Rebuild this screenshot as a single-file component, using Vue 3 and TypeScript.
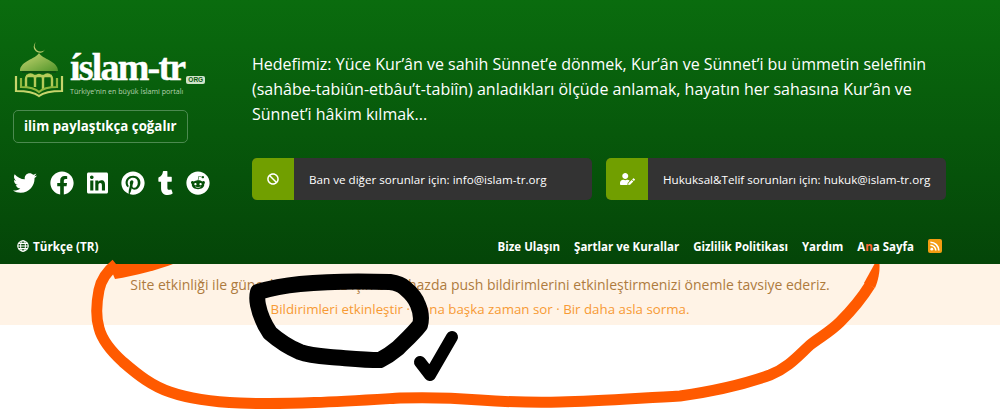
<script setup lang="ts">
const socials = [
  { name: 'twitter', box: '0 0 512 512', w: 24, d: 'M459.37 151.716c.325 4.548.325 9.097.325 13.645 0 138.72-105.583 298.558-298.558 298.558-59.452 0-114.68-17.219-161.137-47.106 8.447.974 16.568 1.299 25.34 1.299 49.055 0 94.213-16.568 130.274-44.832-46.132-.975-84.792-31.188-98.112-72.772 6.498.974 12.995 1.624 19.818 1.624 9.421 0 18.843-1.3 27.614-3.573-48.081-9.747-84.143-51.98-84.143-102.985v-1.299c13.969 7.797 30.214 12.67 47.431 13.319-28.264-18.843-46.781-51.005-46.781-87.391 0-19.492 5.197-37.36 14.294-52.954 51.655 63.675 129.3 105.258 216.365 109.807-1.624-7.797-2.599-15.918-2.599-24.04 0-57.828 46.782-104.934 104.934-104.934 30.213 0 57.502 12.67 76.67 33.137 23.715-4.548 46.456-13.32 66.599-25.34-7.798 24.366-24.366 44.833-46.132 57.827 21.117-2.273 41.584-8.122 60.426-16.243-14.292 20.791-32.161 39.308-52.628 54.253z' },
  { name: 'facebook', box: '0 0 512 512', w: 24, d: 'M504 256C504 119 393 8 256 8S8 119 8 256c0 123.78 90.69 226.38 209.25 245V327.69h-63V256h63v-54.64c0-62.15 37-96.48 93.67-96.48 27.14 0 55.52 4.84 55.52 4.84v61h-31.28c-30.8 0-40.41 19.12-40.41 38.73V256h68.78l-11 71.69h-57.78V501C413.31 482.38 504 379.78 504 256z' },
  { name: 'linkedin', box: '0 0 448 512', w: 21, d: 'M416 32H31.9C14.3 32 0 46.5 0 64.3v383.4C0 465.5 14.3 480 31.9 480H416c17.6 0 32-14.5 32-32.3V64.3c0-17.8-14.4-32.3-32-32.3zM135.4 416H69V202.2h66.5V416zm-33.2-243c-21.3 0-38.5-17.3-38.5-38.5S80.9 96 102.2 96c21.2 0 38.5 17.3 38.5 38.5 0 21.3-17.2 38.5-38.5 38.5zm282.1 243h-66.4V312c0-24.8-.5-56.7-34.5-56.7-34.6 0-39.9 27-39.9 54.9V416h-66.4V202.2h63.7v29.2h.9c8.9-16.8 30.6-34.5 62.9-34.5 67.2 0 79.7 44.3 79.7 101.9V416z' },
  { name: 'pinterest', box: '0 0 496 512', w: 24, d: 'M496 256c0 137-111 248-248 248-25.6 0-50.2-3.9-73.4-11.1 10.1-16.5 25.2-43.5 30.8-65 3-11.6 15.4-59 15.4-59 8.1 15.4 31.7 28.5 56.8 28.5 74.8 0 128.7-68.8 128.7-154.3 0-81.9-66.9-143.2-152.9-143.2-107 0-163.9 71.8-163.9 150.1 0 36.4 19.4 81.7 50.3 96.1 4.7 2.2 7.2 1.2 8.3-3.3.8-3.4 5-20.3 6.9-28.1.6-2.5.3-4.7-1.7-7.1-10.1-12.5-18.3-35.3-18.3-56.6 0-54.7 41.4-107.6 112-107.6 60.9 0 103.6 41.5 103.6 100.9 0 67.1-33.9 113.6-78 113.6-24.3 0-42.6-20.1-36.7-44.8 7-29.5 20.5-61.3 20.5-82.6 0-19-10.2-34.9-31.4-34.9-24.9 0-44.9 25.7-44.9 60.2 0 22 7.4 36.8 7.4 36.8s-24.5 103.8-29 123.2c-5 21.4-3 51.6-.9 71.2C65.4 450.9 0 361.1 0 256 0 119 111 8 248 8s248 111 248 248z' },
  { name: 'tumblr', box: '0 0 320 512', w: 15, d: 'M309.8 480.3c-13.6 14.5-50 31.7-97.4 31.7-120.8 0-147-88.8-147-140.6v-144H17.9c-5.5 0-10-4.5-10-10v-68c0-7.2 4.5-13.6 11.3-16 62-21.8 81.5-76 84.3-117.1.8-11 6.5-16.3 16.1-16.3h70.9c5.5 0 10 4.5 10 10v115.2h83c5.5 0 10 4.4 10 9.9v81.7c0 5.5-4.5 10-10 10h-83.4V360c0 34.2 23.7 53.6 68 35.8 4.8-1.9 9-3.2 12.7-2.2 3.5.9 5.8 3.4 7.4 7.9l22 64.3c1.8 5 3.3 10.6-.4 14.5z' },
  { name: 'reddit', box: '0 0 512 512', w: 24, d: 'M201.5 305.5c-13.8 0-24.9-11.1-24.9-24.6 0-13.8 11.1-24.9 24.9-24.9 13.6 0 24.6 11.1 24.6 24.9 0 13.6-11.1 24.6-24.6 24.6zM504 256c0 137-111 248-248 248S8 393 8 256 119 8 256 8s248 111 248 248zm-132.3-41.2c-9.4 0-17.7 3.9-23.8 10-22.4-15.5-52.6-25.5-86.1-26.6l17.4-78.3 55.4 12.5c0 13.6 11.1 24.6 24.6 24.6 13.8 0 24.9-11.3 24.9-24.9s-11.1-24.9-24.9-24.9c-9.7 0-18 5.8-22.1 13.8l-61.2-13.6c-3-.8-6.1 1.4-6.9 4.4l-19.1 86.4c-33.2 1.4-63.1 11.3-85.5 26.8-6.1-6.4-14.7-10.2-24.1-10.2-34.9 0-46.3 46.9-14.4 62.8-1.1 5-1.7 10.2-1.7 15.5 0 52.6 59.2 95.2 132 95.2 73.1 0 132.3-42.6 132.3-95.2 0-5.3-.6-10.8-1.9-15.8 31.3-16 19.8-62.5-14.9-62.5zM302.8 331c-18.2 18.2-76.1 17.9-93.6 0-2.2-2.2-6.1-2.2-8.3 0-2.5 2.5-2.5 6.4 0 8.6 22.8 22.8 87.3 22.8 110.2 0 2.5-2.2 2.5-6.1 0-8.6-2.2-2.2-6.1-2.2-8.3 0zm7.7-75c-13.6 0-24.6 11.1-24.6 24.9 0 13.6 11.1 24.6 24.6 24.6 13.8 0 24.9-11.1 24.9-24.6 0-13.8-11-24.9-24.9-24.9z' },
]

const links = ['Bize Ulaşın', 'Şartlar ve Kurallar', 'Gizlilik Politikası', 'Yardım']
</script>

<template>
  <div class="page">
    <header class="top">
      <div class="main">
        <aside class="brand">
          <div class="logo">
            <svg class="mosque" viewBox="0 0 52 58" width="52" height="58">
              <defs>
                <linearGradient id="dome" x1="0" y1="0" x2="1" y2="1">
                  <stop offset="0" stop-color="#cbd873" />
                  <stop offset="1" stop-color="#4f9429" />
                </linearGradient>
              </defs>
              <path d="M23 2a6 6 0 1 0 9 7.5a5 5 0 0 1-9-7.5z" fill="#b9c96a" />
              <path d="M26 13c3 6 19 8 19 18H7c0-10 16-12 19-18z" fill="url(#dome)" />
              <path d="M9 31h34v2H9z" fill="#0b4f10" />
              <path d="M13 47v-8a4.500 4.500 0 0 1 9 0v8M22 39a4 4 0 0 1 8 0v11M30 39a4.500 4.500 0 0 1 9 0v8M13 36h26" fill="none" stroke="#b5cb59" stroke-width="2.400" />
              <path d="M3 36v15c9 0 18 1 23 5c5-4 14-5 23-5V36" fill="none" stroke="#c7d56c" stroke-width="2.200" />
              <path d="M8 38v9c7 0 14 1 18 5c4-4 11-5 18-5v-9" fill="none" stroke="#8fb83e" stroke-width="2.200" />
            </svg>
            <div class="wordmark">
              <div class="name">íslam-tr<span class="org">ORG</span></div>
              <div class="tagline">Türkiye'nin en büyük İslami portalı</div>
            </div>
          </div>
          <div class="motto">ilim paylaştıkça çoğalır</div>
          <div class="socials">
            <svg v-for="s in socials" :key="s.name" :viewBox="s.box" :width="s.w" height="24" fill="#fff">
              <path :d="s.d" />
            </svg>
          </div>
        </aside>
        <section class="about">
          <p class="goal">Hedefimiz: Yüce Kur’ân ve sahih Sünnet’e dönmek, Kur’ân ve Sünnet’i bu ümmetin selefinin (sahâbe-tabiûn-etbâu’t-tabiîn) anladıkları ölçüde anlamak, hayatın her sahasına Kur’ân ve Sünnet’i hâkim kılmak...</p>
          <div class="contacts">
            <div class="contact">
              <span class="contact-icon">
                <svg viewBox="0 0 512 512" width="12" height="12" fill="#fff"><path d="M256 8C119.034 8 8 119.033 8 256s111.034 248 248 248 248-111.034 248-248S392.967 8 256 8zm130.108 117.892c65.448 65.448 70 165.481 20.677 235.637L150.47 105.216c70.204-49.356 170.226-44.735 235.638 20.676zM125.892 386.108c-65.448-65.448-70-165.481-20.677-235.637L361.53 406.784c-70.203 49.356-170.226 44.736-235.638-20.676z" /></svg>
              </span>
              <span class="contact-text">Ban ve diğer sorunlar için: info@islam-tr.org</span>
            </div>
            <div class="contact">
              <span class="contact-icon">
                <svg viewBox="0 0 640 512" width="15" height="12" fill="#fff"><path d="M224 256c70.7 0 128-57.3 128-128S294.7 0 224 0 96 57.3 96 128s57.3 128 128 128zm89.6 32h-16.7c-22.2 10.2-46.9 16-72.9 16s-50.6-5.8-72.9-16h-16.7C60.2 288 0 348.2 0 422.4V464c0 26.5 21.5 48 48 48h274.9c-2.4-6.8-3.4-14-2.6-21.3l6.8-60.9 1.2-11.1 7.9-7.9 77.3-77.3c-24.5-27.7-60-45.5-99.9-45.5zm45.3 145.3l-6.8 61c-1.1 10.2 7.5 18.8 17.6 17.6l60.9-6.8 137.9-137.9-71.7-71.7-138 137.8zM633 268.9L595.1 231c-9.3-9.3-24.5-9.3-33.8 0l-37.8 37.8-4.1 4.1 71.8 71.7 41.8-41.8c9.3-9.4 9.3-24.5 0-33.9z" /></svg>
              </span>
              <span class="contact-text">Hukuksal&amp;Telif sorunları için: hukuk@islam-tr.org</span>
            </div>
          </div>
        </section>
      </div>
      <nav class="bottom">
        <span class="lang">
          <svg viewBox="0 0 16 16" width="12" height="12" fill="none" stroke="#fff" stroke-width="1.4">
            <circle cx="8" cy="8" r="7" />
            <ellipse cx="8" cy="8" rx="3.2" ry="7" />
            <path d="M1 8h14M2 4.500h12M2 11.500h12" />
          </svg>
          Türkçe (TR)
        </span>
        <div class="links">
          <span v-for="l in links" :key="l">{{ l }}</span>
          <span>A<span class="struck">n</span>a Sayfa</span>
          <svg class="rss" viewBox="0 0 14 14" width="14" height="14">
            <rect width="14" height="14" rx="2" fill="#f39c12" />
            <circle cx="3.8" cy="10.2" r="1.4" fill="#fff" />
            <path d="M2.4 6.2a5.4 5.4 0 0 1 5.4 5.4M2.4 3.2a8.4 8.4 0 0 1 8.4 8.4" fill="none" stroke="#fff" stroke-width="1.6" />
          </svg>
        </div>
      </nav>
    </header>
    <div class="notice">
      <p class="notice-text">Site etkinliği ile güncel tutulmanız için bu cihazda push bildirimlerini etkinleştirmenizi önemle tavsiye ederiz.</p>
      <p class="notice-actions">Bildirimleri etkinleştir · Bana başka zaman sor · Bir daha asla sorma.</p>
    </div>
    <!-- hand drawn marks on top of the screenshot -->
    <svg class="scribble" viewBox="0 0 1000 414" width="1000" height="414" fill="none" stroke-linejoin="round">
      <path fill="#ff5a00" d="M110 264H173C160 269 135 276 115 279L112 272Z" />
      <path fill="#ff5a00" d="M864 283L874.500 264H879.500C880 272 878 281 875 288Z" />
      <path stroke="#ff5a00" stroke-width="11" d="M116 264C106 272 101 280 99 290C96 305 96 318 99 328C102 340 112 352 123 362C138 375 152 386 170 392C190 399 215 402 240 403C290 405 350 401 400 398C430 397 455 398 480 400C510 402 535 403 560 402C600 401 640 398 680 396C715 391 745 384 770 375C788 368 798 356 810 345C820 337 830 332 840 322C850 312 862 298 870 285" />
      <path stroke="#000" stroke-width="16" stroke-linecap="round" d="M258 292C268 289 280 286 300 284C330 281 360 281 390 282C398 283 402 285 405 288C411 293 416 299 418 305C421 312 422 318 420 325C413 334 405 341 398 348C392 353 386 357 380 360C362 360 346 358 330 357C318 356 308 355 300 352C288 347 278 340 270 333C264 324 260 315 258 305C257 300 257 296 258 292Z" />
      <path stroke="#000" stroke-width="12" stroke-linecap="round" d="M420 362L430 375L452 337" />
    </svg>
  </div>
</template>

<style>
html, body { margin: 0; background: #fff; }
</style>

<style scoped>
.page {
  position: relative;
  width: 1000px;
  height: 414px;
  overflow: hidden;
  font-family: "Open Sans", "Noto Sans", sans-serif;
}
.top {
  height: 264px;
  box-sizing: border-box;
  background: linear-gradient(#0a6c0e, #044508);
  color: #fff;
  display: flex;
  flex-direction: column;
}
.main {
  flex: 1;
  display: flex;
  padding: 40px 54px 0 13px;
}
.brand {
  width: 239px;
  flex: none;
}
.logo {
  display: flex;
  height: 57px;
  gap: 5px;
  align-items: flex-start;
}
.mosque {
  flex: none;
}
.wordmark {
  padding-top: 12px;
}
.name {
  font-family: "Liberation Serif", serif;
  font-weight: 700;
  font-size: 38px;
  line-height: 30px;
  letter-spacing: -1.8px;
  -webkit-text-stroke: 0.4px #fff;
  white-space: nowrap;
}
.org {
  display: inline-block;
  vertical-align: -2px;
  margin-left: 2px;
  font: 700 6.5px/8px "Liberation Sans", sans-serif;
  letter-spacing: 0;
  -webkit-text-stroke: 0;
  background: #cfe3c9;
  color: #0a5a10;
  padding: 0 2px;
  border-radius: 2px;
}
.tagline {
  margin-top: 3px;
  font-size: 7.1px;
  line-height: 9px;
  color: #b7d3b0;
  white-space: nowrap;
}
.motto {
  display: inline-block;
  margin-top: 13px;
  padding: 0 10px;
  height: 33px;
  line-height: 31px;
  box-sizing: border-box;
  border: 1px solid #4c8a50;
  border-radius: 5px;
  background: #0a5c0c;
  font-size: 13.3px;
  font-weight: 700;
  white-space: nowrap;
}
.socials {
  display: flex;
  align-items: center;
  gap: 13px;
  margin-top: 28px;
}
.about {
  flex: 1;
}
.goal {
  margin: 12px 0 0;
  font-size: 16px;
  line-height: 25px;
}
.contacts {
  display: flex;
  gap: 14px;
  margin-top: 31px;
}
.contact {
  flex: 1;
  height: 42px;
  display: flex;
  align-items: center;
  background: #333;
  border-radius: 5px;
  overflow: hidden;
}
.contact-icon {
  width: 42px;
  height: 42px;
  flex: none;
  display: flex;
  align-items: center;
  justify-content: center;
  background: #719f00;
}
.contact-text {
  padding-left: 15px;
  font-size: 11.65px;
  white-space: nowrap;
}
.bottom {
  display: flex;
  align-items: center;
  justify-content: space-between;
  height: 36px;
  padding: 0 58px 0 17px;
  font-size: 11.7px;
  font-weight: 700;
}
.lang {
  display: flex;
  align-items: center;
  gap: 4px;
}
.links {
  display: flex;
  align-items: center;
  gap: 14px;
  font-size: 11.5px;
}
.struck {
  color: #ff6a3a;
}
.notice {
  height: 61px;
  box-sizing: border-box;
  background: #fff3e6;
  text-align: center;
  font-size: 14px;
  padding: 9px 40px 0 0;
}
.notice p {
  margin: 0;
  line-height: 24px;
}
.notice-text {
  color: #ae7b3e;
}
.notice-actions {
  font-size: 13.3px;
  color: #f79a34;
}
.scribble {
  position: absolute;
  left: 0;
  top: 0;
  pointer-events: none;
}
</style>
